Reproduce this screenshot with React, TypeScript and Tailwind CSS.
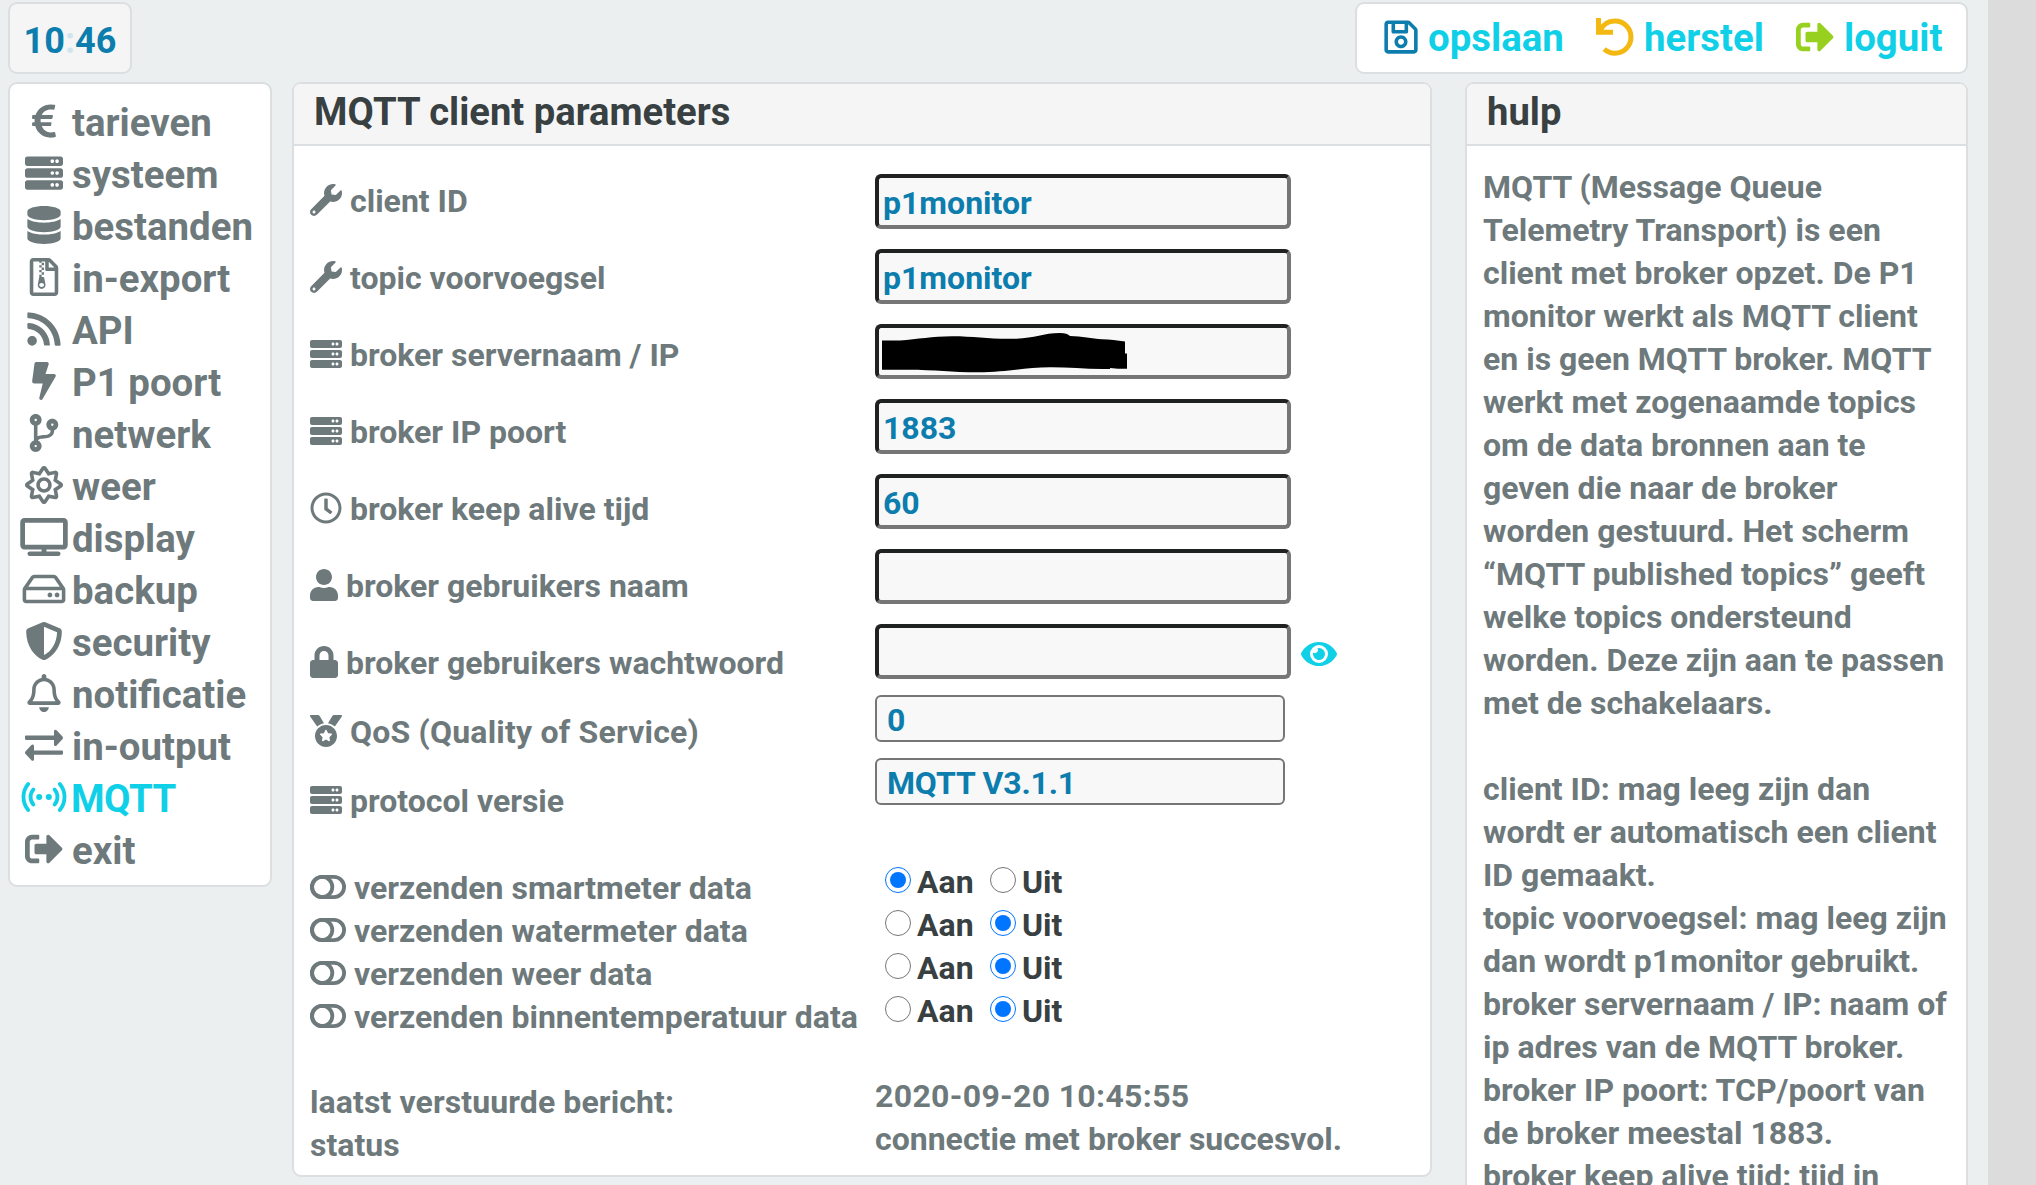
import type { ComponentType, ReactNode } from "react";
import {
  FaBolt,
  FaCodeBranch,
  FaDatabase,
  FaEuroSign,
  FaEye,
  FaLock,
  FaMedal,
  FaRegBell,
  FaRegClock,
  FaRegFileArchive,
  FaRegHdd,
  FaRegSave,
  FaRegSun,
  FaRss,
  FaServer,
  FaShieldAlt,
  FaSignOutAlt,
  FaUser,
  FaWrench,
} from "react-icons/fa";

type Icon = ComponentType<{ className?: string }>;

const DesktopIcon: Icon = ({ className }) => (
  <svg viewBox="0 0 48 38.4" className={className} fill="none" stroke="currentColor">
    <rect x="2.4" y="2.4" width="43.2" height="27" rx="1.8" strokeWidth="4.8" />
    <path d="M24 31v5" strokeWidth="5" />
    <path d="M9.6 36.1h28.8" strokeWidth="4.6" strokeLinecap="round" />
  </svg>
);

const ExchangeIcon: Icon = ({ className }) => (
  <svg viewBox="0 0 38 38" className={className} fill="currentColor">
    <path d="M1.2 9.6H29V5.2c0-1.6 1.6-2 2.6-1l5.8 6.2c.8.9.8 2 0 2.8l-5.8 6.2c-1 1-2.6.6-2.6-1V14H1.2C.5 14 0 13.5 0 12.8v-2C0 10.1.5 9.6 1.2 9.6z" />
    <path d="M36.8 24.4H9V20c0-1.6-1.6-2-2.6-1L.6 25.2c-.8.9-.8 2 0 2.8l5.8 6.2c1 1 2.6.6 2.6-1v-4.4h27.8c.7 0 1.2-.5 1.2-1.2v-2c0-.7-.5-1.2-1.2-1.2z" />
  </svg>
);

const SignalIcon: Icon = ({ className }) => (
  <svg viewBox="0 0 46 38" className={className} fill="none" stroke="currentColor" strokeWidth="3.8" strokeLinecap="round">
    <path d="M7.2 6C.9 13.5.9 24.5 7.2 32M12.4 11.4c-3.8 4.4-3.8 10.8 0 15.2" />
    <path d="M38.8 6c6.3 7.5 6.3 18.5 0 26M33.6 11.4c3.8 4.4 3.8 10.8 0 15.2" />
    <circle cx="18.2" cy="19" r="3" fill="currentColor" stroke="none" />
    <circle cx="27.8" cy="19" r="3" fill="currentColor" stroke="none" />
  </svg>
);

const UndoIcon: Icon = ({ className }) => (
  <svg viewBox="0 0 38 38" className={className} fill="none" stroke="currentColor" strokeWidth="5">
    <path d="M2.5 0v14.2H17" />
    <path d="M3.8 13.2C6.4 7 12 3 18.9 3c9 0 16.1 7.100 16.100 16.100s-7.100 16.100-16.100 16.100c-4.100 0-7.800-1.500-10.700-4.100" />
  </svg>
);

const ToggleIcon: Icon = ({ className }) => (
  <svg viewBox="0 0 36 24" className={className} fill="none" stroke="currentColor" strokeWidth="3.8">
    <rect x="1.9" y="1.9" width="32.2" height="20.2" rx="10.1" />
    <circle cx="12.2" cy="12" r="10.1" />
  </svg>
);

const menu: { icon: Icon; label: string; active?: boolean }[] = [
  { icon: FaEuroSign, label: "tarieven" },
  { icon: FaServer, label: "systeem" },
  { icon: FaDatabase, label: "bestanden" },
  { icon: FaRegFileArchive, label: "in-export" },
  { icon: FaRss, label: "API" },
  { icon: FaBolt, label: "P1 poort" },
  { icon: FaCodeBranch, label: "netwerk" },
  { icon: FaRegSun, label: "weer" },
  { icon: DesktopIcon, label: "display" },
  { icon: FaRegHdd, label: "backup" },
  { icon: FaShieldAlt, label: "security" },
  { icon: FaRegBell, label: "notificatie" },
  { icon: ExchangeIcon, label: "in-output" },
  { icon: SignalIcon, label: "MQTT", active: true },
  { icon: FaSignOutAlt, label: "exit" },
];

const helpLines = [
  "MQTT (Message Queue",
  "Telemetry Transport) is een",
  "client met broker opzet. De P1",
  "monitor werkt als MQTT client",
  "en is geen MQTT broker. MQTT",
  "werkt met zogenaamde topics",
  "om de data bronnen aan te",
  "geven die naar de broker",
  "worden gestuurd. Het scherm",
  "“MQTT published topics” geeft",
  "welke topics ondersteund",
  "worden. Deze zijn aan te passen",
  "met de schakelaars.",
  "",
  "client ID: mag leeg zijn dan",
  "wordt er automatisch een client",
  "ID gemaakt.",
  "topic voorvoegsel: mag leeg zijn",
  "dan wordt p1monitor gebruikt.",
  "broker servernaam / IP: naam of",
  "ip adres van de MQTT broker.",
  "broker IP poort: TCP/poort van",
  "de broker meestal 1883.",
  "broker keep alive tijd: tijd in",
];

function Label({ icon: I, size = "h-8 w-8", children }: { icon: Icon; size?: string; children: ReactNode }) {
  return (
    <div className="flex h-[43px] items-center gap-2 whitespace-nowrap">
      <span className="pb-px">
        <I className={size} />
      </span>
      {children}
    </div>
  );
}

function Field({ children }: { children?: ReactNode }) {
  return (
    <div className="h-[55px] w-[416px] rounded-[6px] border-4 border-t-[#202222] border-r-[#767676] border-b-[#767676] border-l-[#202222] bg-[#f8f8f8] pt-1 pl-[4px] leading-[43px] text-[#0c7dad]">
      {children}
    </div>
  );
}

function Select({ children }: { children: ReactNode }) {
  return (
    <div className="h-[47px] w-[410px] rounded-[6px] border-2 border-[#767676] bg-[#f8f8f8] pl-[10px] leading-[46px] text-[#0c7dad]">
      {children}
    </div>
  );
}

function Radio({ on }: { on: boolean }) {
  return on ? (
    <span className="mb-1 flex size-[26px] items-center justify-center rounded-full border-[1.5px] border-[#0075ff] bg-white">
      <span className="size-4 rounded-full bg-[#0075ff]" />
    </span>
  ) : (
    <span className="mb-1 size-[26px] rounded-full border-[1.5px] border-[#767676] bg-white" />
  );
}

function Choice({ on }: { on: boolean }) {
  return (
    <div className="flex h-[43px] items-center pl-2.5 text-[#384042]">
      <Radio on={on} />
      <span className="w-[79px] pl-[6px]">Aan</span>
      <Radio on={!on} />
      <span className="pl-[6px]">Uit</span>
    </div>
  );
}

function PanelHeader({ children }: { children: ReactNode }) {
  return (
    <div className="h-[62px] rounded-t-[6px] border-b-2 border-[#dbdfe1] bg-[#f5f5f5] pl-5 text-[38.2px] leading-[57px] text-[#384042]">
      {children}
    </div>
  );
}

export default function App() {
  return (
    <div className="flex h-[1185px] w-[2036px] overflow-hidden bg-[#ebeff0] font-['Roboto',sans-serif] text-[32px] font-bold text-[#6e797c]">
      <div className="flex w-[1988px] shrink-0 flex-col pt-0.5 pl-2">
        <header className="flex w-[1960px] justify-between">
          <div className="flex h-[72px] w-[124px] items-center justify-center rounded-[9px] border-2 border-[#dbdfe1] bg-[#f5f5f5] pt-1.5 text-[36px] text-[#0c7dad]">
            10<span className="text-[#d2e5ee]">:</span>46
          </div>
          <div className="flex h-[72px] w-[613px] items-center rounded-[9px] border-2 border-[#dbdfe1] bg-white pb-0.5 pl-[27px] text-[38.4px] text-[#10d0e8]">
            <FaRegSave className="h-[38px] w-[34px] shrink-0" color="#0c7dad" />
            <span className="w-[178px] shrink-0 pt-0.5 pl-[10px]">opslaan</span>
            <UndoIcon className="h-[38px] w-[38px] shrink-0 text-[#f3b912]" />
            <span className="w-[162px] shrink-0 pt-0.5 pl-[10px]">herstel</span>
            <FaSignOutAlt className="h-[38px] w-[38px] shrink-0" color="#98d020" />
            <span className="shrink-0 pt-0.5 pl-[10px]">loguit</span>
          </div>
        </header>

        <div className="mt-2 flex w-[1960px] items-start">
          <nav className="h-[805px] w-[264px] shrink-0 rounded-[9px] border-2 border-[#dbdfe1] bg-white pt-3 pl-[8px] text-[38.4px]">
            {menu.map(({ icon: I, label, active }) => (
              <div
                key={label}
                className={active ? "flex h-[52px] items-center text-[#10d0e8]" : "flex h-[52px] items-center"}
              >
                <span className="flex w-[52px] shrink-0 justify-center pb-[3px]">
                  <I className="h-[38px] w-[48px]" />
                </span>
                <span className={active ? "pt-px pl-px tracking-[-0.7px]" : "pt-px pl-[2px]"}>{label}</span>
              </div>
            ))}
          </nav>

          <main className="ml-5 h-[1095px] w-[1140px] shrink-0 rounded-[9px] border-2 border-[#dbdfe1] bg-white">
            <PanelHeader>MQTT client parameters</PanelHeader>
            <div className="flex pl-4">
              <div className="w-[565px] shrink-0 pt-[33px]">
                <div className="flex flex-col gap-[34px]">
                  <Label icon={FaWrench}>client ID</Label>
                  <Label icon={FaWrench}>topic voorvoegsel</Label>
                  <Label icon={FaServer}>broker servernaam / IP</Label>
                  <Label icon={FaServer}>broker IP poort</Label>
                  <Label icon={FaRegClock}>broker keep alive tijd</Label>
                  <Label icon={FaUser} size="h-8 w-7">broker gebruikers naam</Label>
                  <Label icon={FaLock} size="h-8 w-7">broker gebruikers wachtwoord</Label>
                </div>
                <div className="mt-[26px] flex flex-col gap-[26px]">
                  <Label icon={FaMedal}>
                    <span className="tracking-[0.2px]">QoS (Quality of Service)</span>
                  </Label>
                  <Label icon={FaServer}>protocol versie</Label>
                </div>
                <div className="mt-[44px]">
                  <Label icon={ToggleIcon} size="h-6 w-9">verzenden smartmeter data</Label>
                  <Label icon={ToggleIcon} size="h-6 w-9">verzenden watermeter data</Label>
                  <Label icon={ToggleIcon} size="h-6 w-9">verzenden weer data</Label>
                  <Label icon={ToggleIcon} size="h-6 w-9">verzenden binnentemperatuur data</Label>
                </div>
                <div className="mt-[43px] leading-[43px]">
                  <p className="tracking-[0.1px]">laatst verstuurde bericht:</p>
                  <p>status</p>
                </div>
              </div>

              <div className="pt-7">
                <div className="flex flex-col gap-5">
                  <Field>p1monitor</Field>
                  <Field>p1monitor</Field>
                  <Field>
                    <svg viewBox="0 0 245 40" className="mt-px -ml-px h-10 w-[245px]" fill="#000">
                      <path d="M0 7.5h18C36 6 50 3.5 70 3.2c22 0 38 3 60 2.6 22 0 30-5.8 48-5.8 5 0 8 1 10 3 12 0 22 3 32 3.2 8 .3 15 1 23 2.3v12h2v15.2h-9l-8-.8v1c-22 .6-40-1.7-60-1.6-25 0-42 5-72 5-28 0-45-3-76-2.6H0z" />
                    </svg>
                  </Field>
                  <Field>1883</Field>
                  <Field>60</Field>
                  <Field />
                  <div className="flex items-center gap-2.5">
                    <Field />
                    <span className="pt-[5px]">
                      <FaEye className="h-8 w-9" color="#10d0e8" />
                    </span>
                  </div>
                </div>
                <div className="mt-4 flex flex-col gap-4">
                  <Select>0</Select>
                  <Select>
                    <span className="tracking-[-0.2px]">MQTT V3.1.1</span>
                  </Select>
                </div>
                <div className="mt-[55px]">
                  <Choice on />
                  <Choice on={false} />
                  <Choice on={false} />
                  <Choice on={false} />
                </div>
                <div className="mt-[43px] leading-[43px]">
                  <p className="tracking-[0.33px]">2020-09-20 10:45:55</p>
                  <p>connectie met broker succesvol.</p>
                </div>
              </div>
            </div>
          </main>

          <aside className="ml-auto h-[1200px] w-[503px] shrink-0 rounded-t-[9px] border-2 border-[#dbdfe1] bg-white">
            <PanelHeader>hulp</PanelHeader>
            <div className="pt-5 pl-4 leading-[43px] whitespace-nowrap">
              {helpLines.map((line, i) => (
                <p key={i} className="h-[43px]">
                  {line}
                </p>
              ))}
            </div>
          </aside>
        </div>
      </div>
      <div className="w-12 bg-[#dcdcdc]" />
    </div>
  );
}
